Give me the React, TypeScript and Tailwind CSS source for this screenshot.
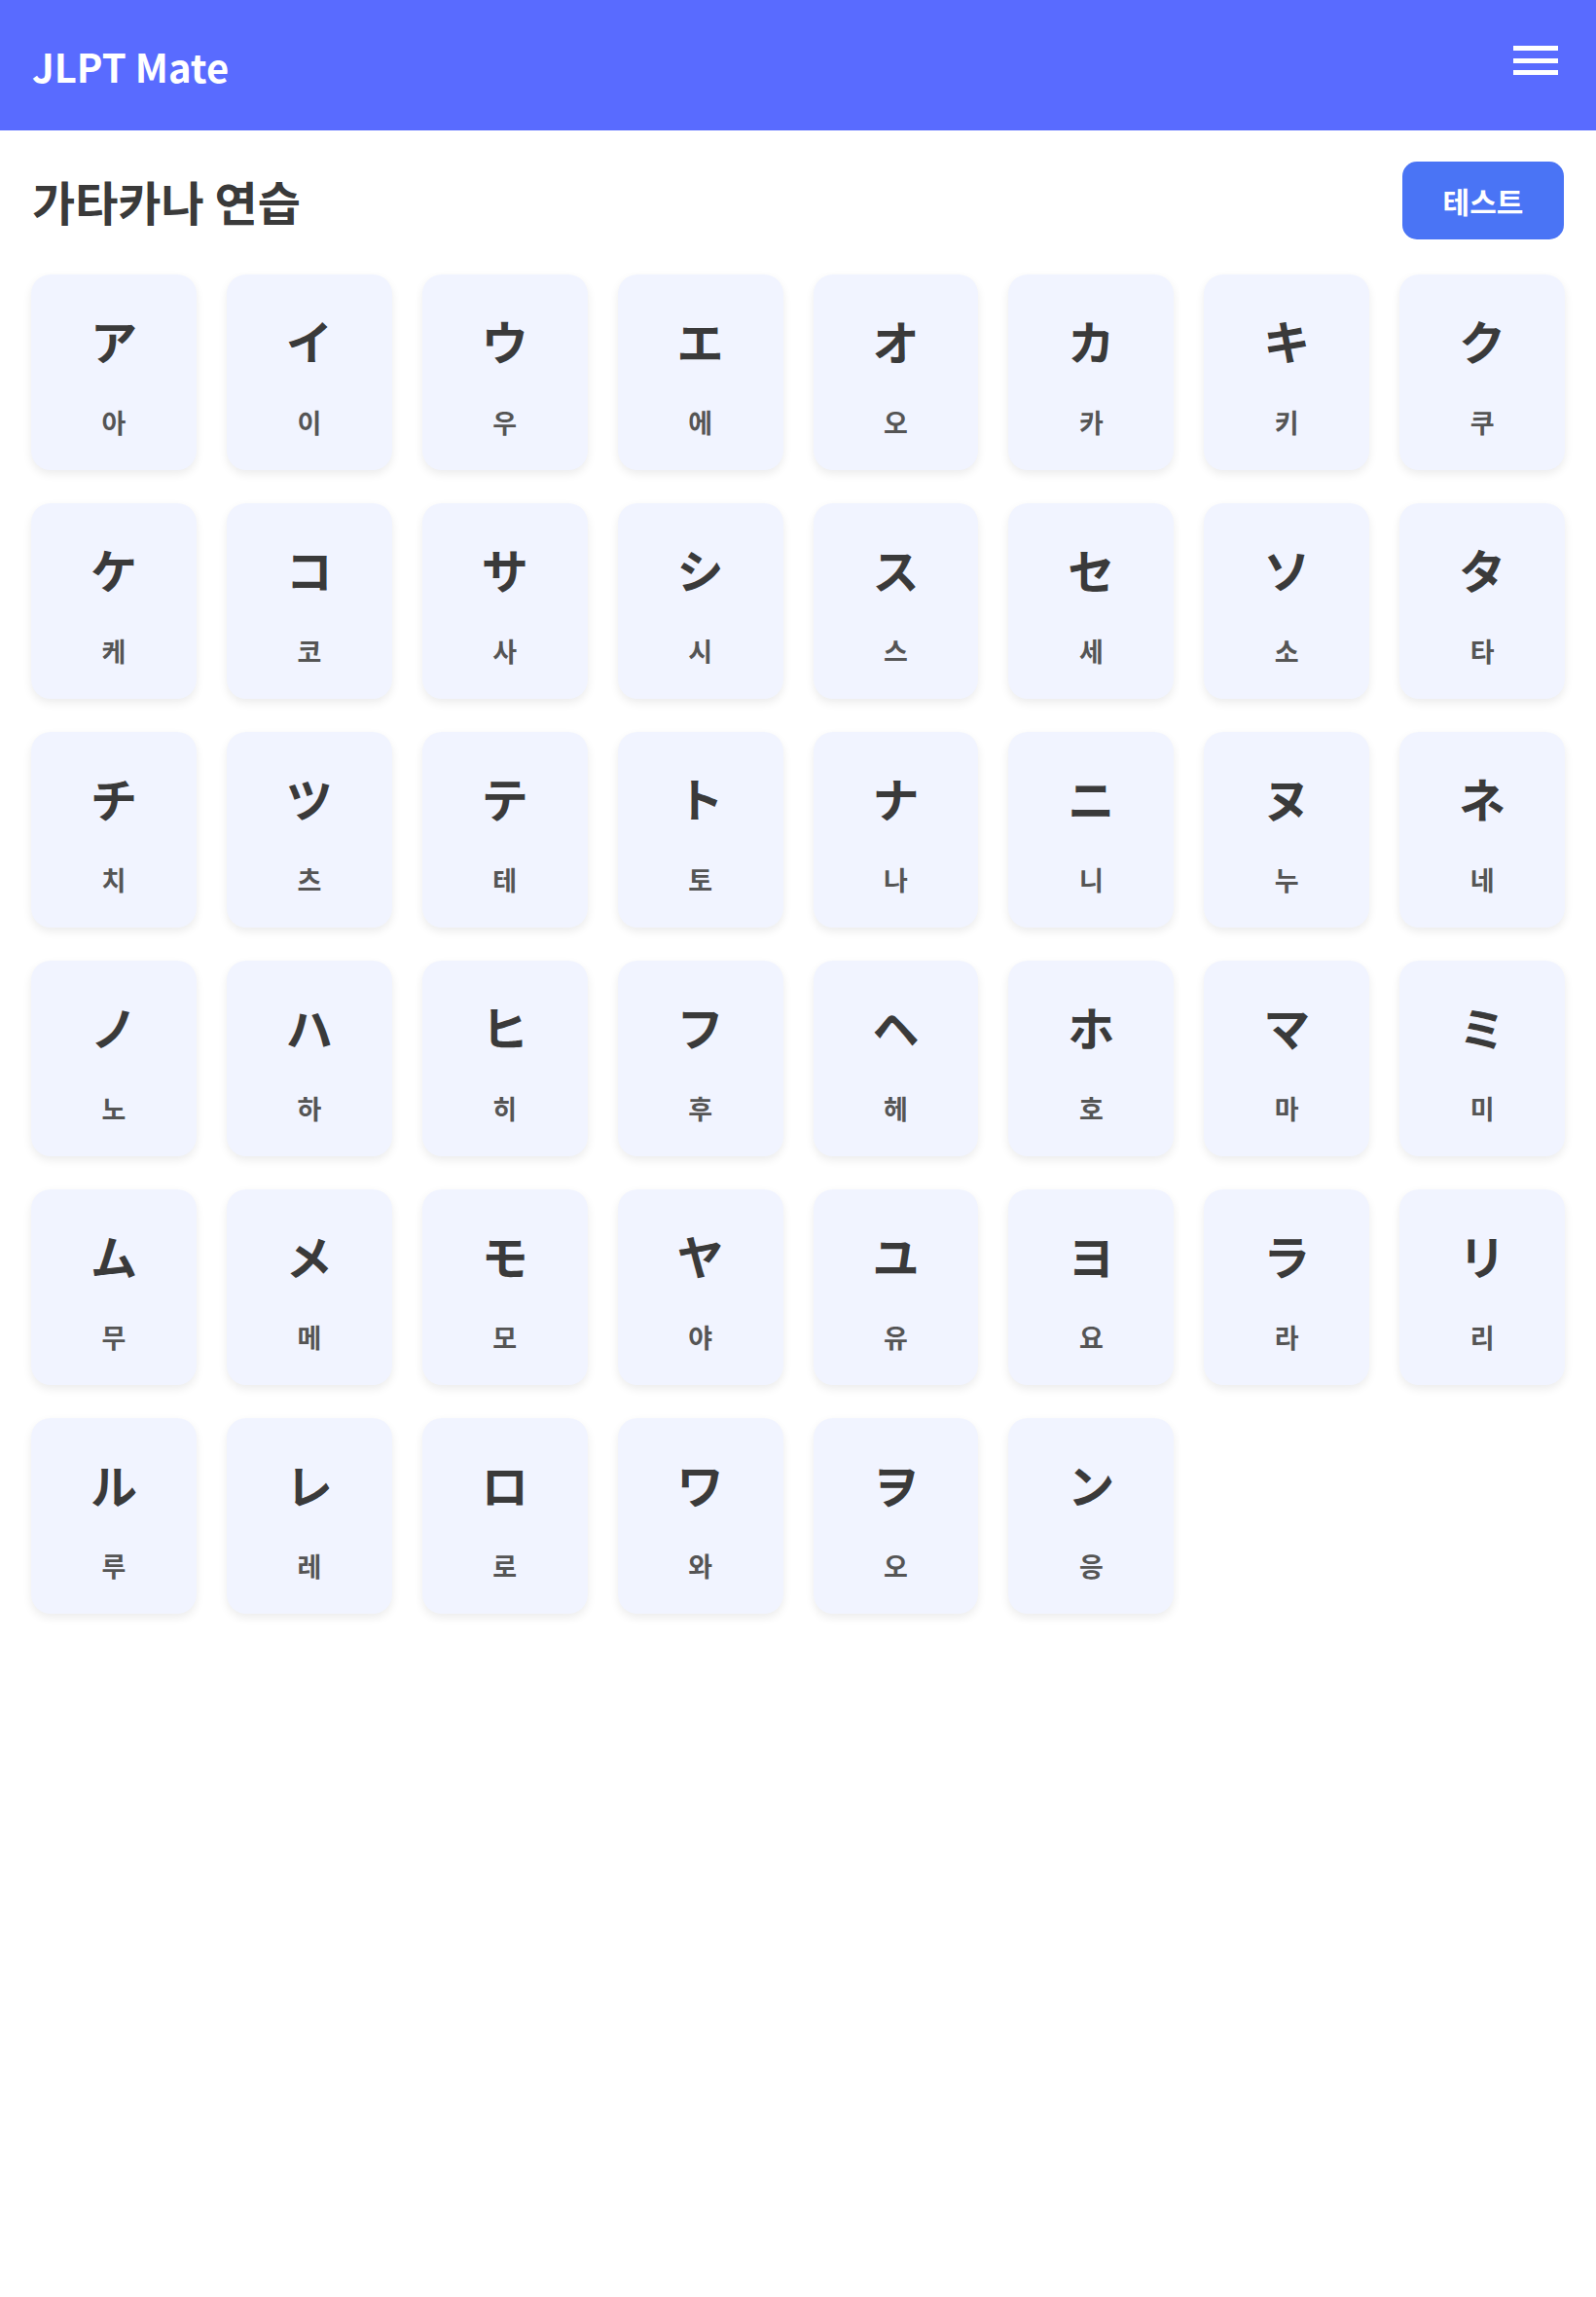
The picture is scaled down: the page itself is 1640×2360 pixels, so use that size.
import React from 'react';

// --- DATA ---
const katakana: { kana: string; ko: string }[] = [
  { kana: 'ア', ko: '아' }, { kana: 'イ', ko: '이' }, { kana: 'ウ', ko: '우' }, { kana: 'エ', ko: '에' },
  { kana: 'オ', ko: '오' }, { kana: 'カ', ko: '카' }, { kana: 'キ', ko: '키' }, { kana: 'ク', ko: '쿠' },
  { kana: 'ケ', ko: '케' }, { kana: 'コ', ko: '코' }, { kana: 'サ', ko: '사' }, { kana: 'シ', ko: '시' },
  { kana: 'ス', ko: '스' }, { kana: 'セ', ko: '세' }, { kana: 'ソ', ko: '소' }, { kana: 'タ', ko: '타' },
  { kana: 'チ', ko: '치' }, { kana: 'ツ', ko: '츠' }, { kana: 'テ', ko: '테' }, { kana: 'ト', ko: '토' },
  { kana: 'ナ', ko: '나' }, { kana: 'ニ', ko: '니' }, { kana: 'ヌ', ko: '누' }, { kana: 'ネ', ko: '네' },
  { kana: 'ノ', ko: '노' }, { kana: 'ハ', ko: '하' }, { kana: 'ヒ', ko: '히' }, { kana: 'フ', ko: '후' },
  { kana: 'ヘ', ko: '헤' }, { kana: 'ホ', ko: '호' }, { kana: 'マ', ko: '마' }, { kana: 'ミ', ko: '미' },
  { kana: 'ム', ko: '무' }, { kana: 'メ', ko: '메' }, { kana: 'モ', ko: '모' }, { kana: 'ヤ', ko: '야' },
  { kana: 'ユ', ko: '유' }, { kana: 'ヨ', ko: '요' }, { kana: 'ラ', ko: '라' }, { kana: 'リ', ko: '리' },
  { kana: 'ル', ko: '루' }, { kana: 'レ', ko: '레' }, { kana: 'ロ', ko: '로' }, { kana: 'ワ', ko: '와' },
  { kana: 'ヲ', ko: '오' }, { kana: 'ン', ko: '응' },
];

// --- COMPONENTS ---

const Header = () => (
  <header className="h-[134px] bg-[#596bff] flex items-center justify-between pl-[33px] pr-[39px]">
    <h1 className="text-[40px] leading-none font-bold text-white mt-px">JLPT Mate</h1>
    <button className="flex flex-col gap-[7.5px] mb-[10px]" aria-label="menu">
      <span className="block w-[46px] h-[5px] bg-white" />
      <span className="block w-[46px] h-[5px] bg-white" />
      <span className="block w-[46px] h-[5px] bg-white" />
    </button>
  </header>
);

const KanaCard = ({ kana, ko }: { kana: string; ko: string }) => (
  <div className="h-[201px] rounded-[20px] bg-[#f1f4ff] shadow-[0_4px_10px_rgba(0,0,0,0.08)] flex flex-col items-center pt-[43px]">
    <div className="text-[48px] leading-none font-bold text-[#3a3a3a]">{kana}</div>
    <div className="mt-[47px] text-[27px] leading-none font-semibold text-[#555]">{ko}</div>
  </div>
);

function App() {
  return (
    <div
      className="min-h-screen bg-white"
      style={{ fontFamily: '"Noto Sans CJK KR", "Noto Sans CJK JP", "Noto Sans", sans-serif' }}
    >
      <Header />
      <main className="px-8 pt-8">
        <div className="flex items-center justify-between pl-px pr-px">
          <h2 className="text-[48px] leading-none font-bold text-[#3a3a3a]">가타카나 연습</h2>
          <button className="h-[80px] w-[166px] rounded-[15px] bg-[#4a74f5] text-white text-[30px] font-bold">
            테스트
          </button>
        </div>
        <div className="mt-9 grid grid-cols-8 gap-x-[31px] gap-y-[34px]">
          {katakana.map((k, i) => (
            <KanaCard key={i} kana={k.kana} ko={k.ko} />
          ))}
        </div>
      </main>
    </div>
  );
}

export default App;
